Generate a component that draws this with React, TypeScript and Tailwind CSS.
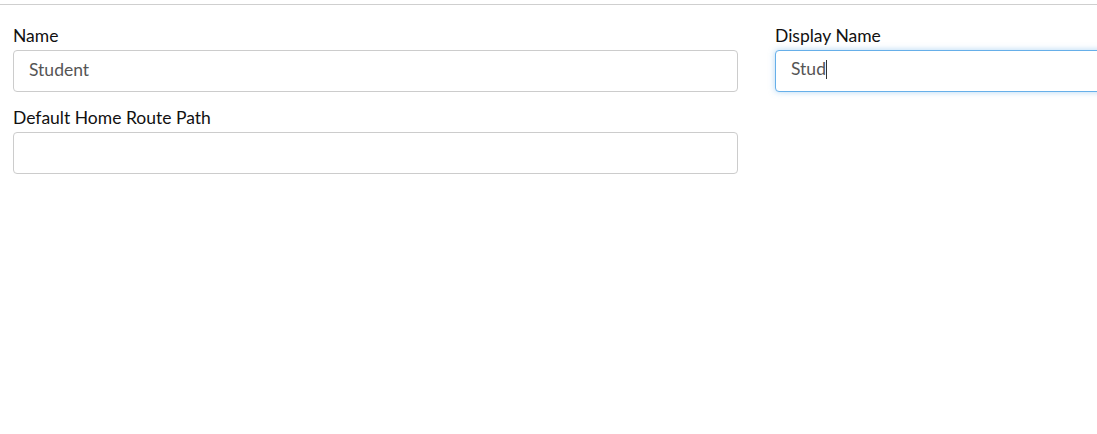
import React from 'react';

const inputClass =
  'block w-full h-[42px] px-[15px] border border-[#ccc] rounded-[4px] bg-white text-[17.5px] leading-[20px] text-[#555] outline-none';

const labelClass = 'block h-[20px] leading-[20px] mb-[4px] text-[17.5px] text-[#111]';

export default function App() {
  return (
    <div
      className="w-[1097px] h-[434px] overflow-hidden bg-white"
      style={{ fontFamily: 'Lato, "Noto Sans", sans-serif' }}
    >
      <div className="mt-[4px] h-px bg-[#cfcfcf]" />
      <form className="pl-[13px] pt-[21px] grid grid-cols-[725px_725px] gap-x-[37px] gap-y-[16px] w-max">
        {/* Name */}
        <div>
          <label className={labelClass}>Name</label>
          <input className={`${inputClass} pb-[3px]`} defaultValue="Student" readOnly />
        </div>

        {/* Display Name (focused) */}
        <div>
          <label className={labelClass}>Display Name</label>
          <div className="flex items-center h-[42px] px-[15px] pb-[3px] border border-[#66afe9] rounded-[4px] bg-white text-[17.5px] text-[#555] shadow-[0_0_6px_rgba(102,175,233,0.5)]">
            <span>Stud</span>
            <span className="inline-block w-px h-[19px] bg-[#333]" />
          </div>
        </div>

        {/* Default Home Route Path */}
        <div>
          <label className={labelClass}>Default Home Route Path</label>
          <input className={inputClass} defaultValue="" readOnly />
        </div>
      </form>
    </div>
  );
}
